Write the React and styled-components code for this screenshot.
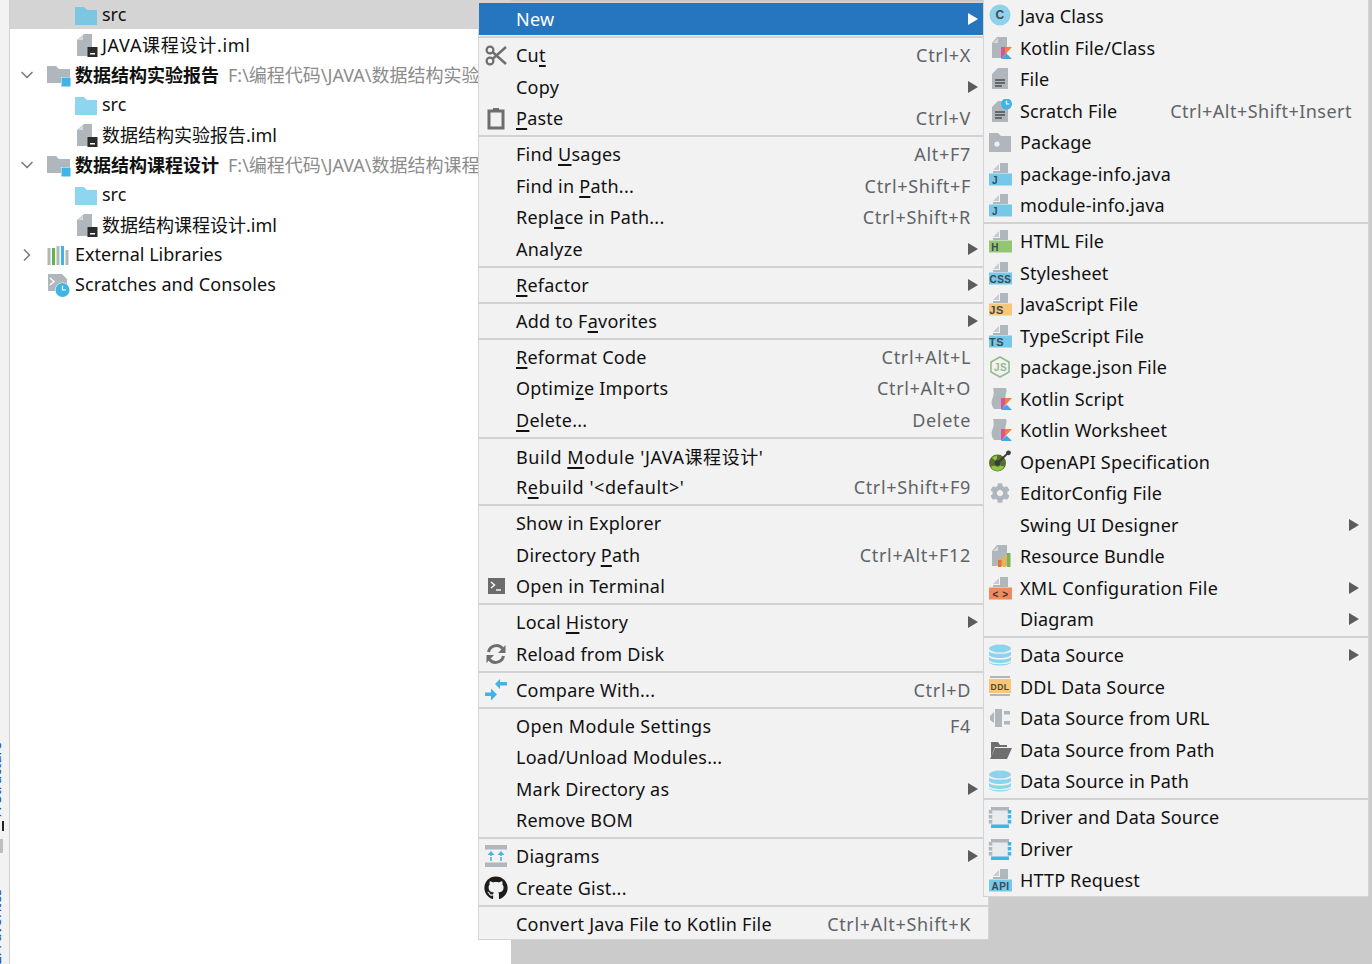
import React from 'react';
import styled, { createGlobalStyle } from 'styled-components';
import { ChevronDown, ChevronRight } from 'lucide-react';
import { FaGithub, FaCog } from 'react-icons/fa';

const GlobalStyle = createGlobalStyle`
  html, body {
    margin: 0;
    background: #cbcbcb;
    overflow: hidden;
  }
  body {
    font-family: "Noto Sans", "Noto Sans CJK SC", sans-serif;
    font-size: 18px;
    color: #111;
  }
`;

const Page = styled.div`
  position: relative;
  display: flex;
  width: 1372px;
  height: 964px;
  overflow: hidden;
`;

const Gutter = styled.div`
  width: 9px;
  flex-shrink: 0;
  box-sizing: border-box;
  padding-top: 742px;
  background: #f2f2f2;
  overflow: hidden;
  display: flex;
  flex-direction: column;
`;

const GutterLabel = styled.div`
  flex-shrink: 0;
  writing-mode: vertical-rl;
  transform: rotate(180deg);
  margin-left: -13px;
  font-size: 14px;
  line-height: 18px;
  color: #0f4fb8;
  white-space: nowrap;
`;

const GutterBar = styled.div`
  flex-shrink: 0;
  width: 1.5px;
  height: 10px;
  margin: 3px 0 8px 2px;
  background: #222;
`;

const GutterBlock = styled.div`
  flex-shrink: 0;
  width: 3px;
  height: 14px;
  margin-bottom: 36px;
  background: #bdbdbd;
`;

const Tree = styled.div`
  width: 501px;
  flex-shrink: 0;
  border-left: 1px solid #d0d0d0;
  background: #fff;
  overflow: hidden;
`;

const TreeRow = styled.div`
  display: flex;
  align-items: center;
  height: ${p => (p.$selected ? 29 : 30)}px;
  margin-bottom: ${p => (p.$selected ? 1 : 0)}px;
  padding-left: ${p => p.$indent}px;
  background: ${p => (p.$selected ? '#d4d4d4' : 'transparent')};
  white-space: nowrap;
`;

const Toggle = styled.span`
  display: flex;
  justify-content: center;
  width: 20px;
  margin-right: 10px;
  color: #7d7d7d;
`;

const TreeIcon = styled.span`
  display: flex;
  width: 24px;
  margin-right: 4px;
  flex-shrink: 0;
`;

const TreeName = styled.span`
  margin-top: -2px;
  font-weight: ${p => (p.$bold ? 700 : 400)};
  letter-spacing: ${p => p.$spacing || 0}px;
`;

const TreePath = styled.span`
  margin: -2px 0 0 9px;
  color: #8c8c8c;
`;

const Menu = styled.div`
  position: absolute;
  box-sizing: border-box;
  left: ${p => p.$left}px;
  top: ${p => p.$top}px;
  width: ${p => p.$width}px;
  padding-top: 0.25px;
  background: #f2f2f2;
  border: 1px solid #d4d4d4;
`;

const Row = styled.div`
  display: flex;
  align-items: center;
  height: 31.5px;
  padding-right: ${p => p.$right}px;
  background: ${p => (p.$active ? '#2675bf' : 'transparent')};
  color: ${p => (p.$active ? '#fff' : '#111')};
  white-space: nowrap;
`;

const Slot = styled.span`
  display: flex;
  justify-content: center;
  flex-shrink: 0;
  width: ${p => p.$size}px;
  margin-right: ${p => p.$gap}px;
`;

const Label = styled.span`
  flex: 1;
  letter-spacing: ${p => p.$spacing}px;
`;

const Mnemonic = styled.span`
  text-decoration: underline;
  text-underline-offset: 3px;
  text-decoration-thickness: 1.5px;
`;

const Shortcut = styled.span`
  color: #5f6468;
  letter-spacing: ${p => p.$spacing}px;
`;

const Arrow = styled.span`
  width: 0;
  height: 0;
  margin-right: -6.5px;
  border-left: 10px solid ${p => (p.$active ? '#fff' : '#5c5c5c')};
  border-top: 6px solid transparent;
  border-bottom: 6px solid transparent;
`;

const Divider = styled.div`
  display: flex;
  align-items: center;
  height: 4.5px;
  &::before {
    content: '';
    flex: 1;
    height: 2px;
    background: #d2d2d2;
  }
`;

const Svg = ({ children }) => (
  <svg width="24" height="24" viewBox="0 0 24 24" style={{ display: 'block' }}>
    {children}
  </svg>
);

const GRAY = '#afb7bd';
const BLUE = '#40b4e5';
const DARK = '#6e6e6e';

const Tag = ({ x = 12.5, size = 10, fill = '#3c4a52', children, y = 22 }) => (
  <text
    x={x}
    y={y}
    textAnchor="middle"
    fontSize={size}
    fontWeight="700"
    letterSpacing="0.5"
    fontFamily="'Liberation Sans', sans-serif"
    fill={fill}
  >
    {children}
  </text>
);

const Kotlin = () => (
  <g>
    <polygon points="13,11 17,11 17,18 13,23" fill="#d1569b" />
    <polygon points="17,11 24,11 17,18.500" fill="#f4803a" />
    <polygon points="13,23 18.500,17.500 24,23" fill="#3fa9e8" />
  </g>
);

const BandFile = ({ band, children }) => (
  <Svg>
    <polygon points="12,1 20,1 20,11 5,11 5,9 12,9" fill={GRAY} />
    <polygon points="5,8 11,2 11,8" fill="#c7ccd1" />
    <rect x="1" y="11.500" width="23" height="12" fill={band} />
    {children}
  </Svg>
);

const Clock = ({ cx, cy, r }) => (
  <g>
    <circle cx={cx} cy={cy} r={r} fill={BLUE} />
    <path d={`M${cx} ${cy - r * 0.6}V${cy}H${cx + r * 0.5}`} stroke="#fff" strokeWidth="1.2" fill="none" />
  </g>
);

const Lines = () => (
  <path d="M7 13h10M7 16h10M7 19h7" stroke="#4d4d4d" strokeWidth="1.4" />
);

const Database = ({ color = '#8ed3ee' }) => (
  <Svg>
    <ellipse cx="12" cy="5.500" rx="11" ry="4" fill={color} />
    <path d="M1 8.500c2 3 20 3 22 0v3.500c-2 4-20 4-22 0z" fill={color} />
    <path d="M1 14c2 3.500 20 3.500 22 0v3c-2 4-20 4-22 0z" fill={color} />
    <path d="M1 19c2 3 20 3 22 0v.5c-2 4-20 4-22 0z" fill={color} />
  </Svg>
);

const Driver = () => (
  <Svg>
    <rect x="3" y="4" width="18" height="17" fill="#e9ebec" />
    <rect x="3" y="2" width="18" height="3.500" fill={GRAY} />
    <path d="M2.500 5v15" stroke={GRAY} strokeWidth="3.500" strokeDasharray="3.500 1.500" />
    <path d="M21.500 5v15" stroke={BLUE} strokeWidth="3.500" strokeDasharray="3.500 1.500" />
    <rect x="3" y="19.500" width="18" height="3.500" fill={BLUE} />
  </Svg>
);

const icons = {
  cut: (
    <Svg>
      <circle cx="6" cy="7" r="3.400" fill="none" stroke={DARK} strokeWidth="2.200" />
      <circle cx="6" cy="18" r="3.400" fill="none" stroke={DARK} strokeWidth="2.200" />
      <path d="M8.500 9L22 21M8.500 16L22 4" stroke={DARK} strokeWidth="2.400" />
    </Svg>
  ),
  paste: (
    <Svg>
      <rect x="5" y="5" width="14" height="17" fill="none" stroke={DARK} strokeWidth="3" />
      <rect x="9" y="2" width="6" height="4" fill={DARK} />
    </Svg>
  ),
  terminal: (
    <Svg>
      <rect x="4" y="4" width="17" height="16" fill="#6b6b6b" />
      <path d="M7 8l3.500 3L7 14" stroke="#fff" strokeWidth="1.400" fill="none" />
      <path d="M12 16h5" stroke="#fff" strokeWidth="1.400" />
    </Svg>
  ),
  reload: (
    <Svg>
      <path d="M4.500 10a8 8 0 0 1 14-3.500" stroke={DARK} strokeWidth="3" fill="none" />
      <polygon points="21.500,3 21.500,11 14,11" fill={DARK} />
      <path d="M19.500 14a8 8 0 0 1-14 3.500" stroke={DARK} strokeWidth="3" fill="none" />
      <polygon points="2.500,21 2.500,13 10,13" fill={DARK} />
    </Svg>
  ),
  compare: (
    <Svg>
      <polygon points="11,6 16,1 16,4 23,4 23,7.500 16,7.500 16,11" fill={BLUE} />
      <polygon points="13,16.500 7,10.500 7,14.500 1,14.500 1,18 7,18 7,22.500" fill={BLUE} />
    </Svg>
  ),
  diagrams: (
    <Svg>
      <rect x="1" y="1" width="22" height="4.500" fill={GRAY} />
      <rect x="1" y="18.500" width="22" height="4.500" fill={GRAY} />
      <path d="M7 17V10M17 17V10" stroke={BLUE} strokeWidth="1.600" strokeDasharray="4 1" />
      <path d="M3.500 11L7 7l3.500 4M13.500 11L17 7l3.500 4" fill={BLUE} />
    </Svg>
  ),
  github: <FaGithub size={24} color="#1c1c1c" />,
  javaClass: (
    <Svg>
      <circle cx="12" cy="11" r="10.500" fill="#8fd2ea" />
      <Tag x={12} y={15} size={12} fill="#3f4c54">C</Tag>
    </Svg>
  ),
  kotlinFile: (
    <Svg>
      <polygon points="9,1 19,1 19,22 4,22 4,7" fill={GRAY} />
      <polygon points="5,7 10,2 10,7" fill="#d5d9dc" />
      <Kotlin />
    </Svg>
  ),
  file: (
    <Svg>
      <polygon points="10,1 20,1 20,22 4,22 4,7" fill={GRAY} />
      <Lines />
    </Svg>
  ),
  scratch: (
    <Svg>
      <polygon points="10,2 20,2 20,23 4,23 4,8" fill={GRAY} />
      <Lines />
      <Clock cx={18.500} cy={5} r={5.500} />
    </Svg>
  ),
  pkg: (
    <Svg>
      <path d="M1 3h9l3 3h10v16H1z" fill={GRAY} />
      <circle cx="9" cy="14" r="2.600" fill="#eef0f1" />
    </Svg>
  ),
  java: <BandFile band="#76c8e8"><Tag x={7}>J</Tag></BandFile>,
  html: <BandFile band="#93c572"><Tag x={7}>H</Tag></BandFile>,
  css: <BandFile band="#76c8e8"><Tag>CSS</Tag></BandFile>,
  js: <BandFile band="#f8c676"><Tag x={8.500} size={11}>JS</Tag></BandFile>,
  ts: <BandFile band="#76c8e8"><Tag x={8.500} size={11}>TS</Tag></BandFile>,
  api: <BandFile band="#76c8e8"><Tag>API</Tag></BandFile>,
  nodeJson: (
    <Svg>
      <polygon points="12,2 21,7 21,17 12,22 3,17 3,7" fill="none" stroke="#93bb8b" strokeWidth="1.600" />
      <Tag y={16} size={10} fill="#93bb8b">JS</Tag>
    </Svg>
  ),
  kotlinScript: (
    <Svg>
      <path d="M5 1h13c2 4-2 7 0 12l-2 9H6c-3-4-3-8-1-12 1-3 1-6 0-9z" fill={GRAY} />
      <Kotlin />
    </Svg>
  ),
  openApi: (
    <Svg>
      <circle cx="9.500" cy="13" r="8.500" fill="#566f2e" />
      <path d="M3 16.500a7 7 0 0 0 13 0l-4-1a3 3 0 0 1-5 0z" fill="#8ec63f" />
      <path d="M4 8a7 7 0 0 1 5-2.500v3.500a4 4 0 0 0-2 1.500z" fill="#8ec63f" />
      <circle cx="9.500" cy="13" r="2.800" fill="#3a3a3a" />
      <path d="M9.500 13L20 3" stroke="#3a3a3a" strokeWidth="1.800" />
      <circle cx="20.500" cy="2.800" r="2.400" fill="#3a3a3a" />
    </Svg>
  ),
  gear: <FaCog size={20} color={GRAY} />,
  bundle: (
    <Svg>
      <polygon points="9,1 19,1 19,22 4,22 4,7" fill={GRAY} />
      <polygon points="5,7 10,2 10,7" fill="#d5d9dc" />
      <rect x="10" y="16" width="3.500" height="7" fill="#e8742f" />
      <rect x="14.500" y="12" width="3.500" height="11" fill="#f0b34a" />
      <rect x="19" y="9" width="3.500" height="14" fill="#7fb44b" />
    </Svg>
  ),
  xml: <BandFile band="#ee8a5f"><Tag fill="#4a2b20">{'< >'}</Tag></BandFile>,
  ddl: (
    <Svg>
      <rect x="2" y="1" width="20" height="2" fill={GRAY} />
      <rect x="2" y="19" width="20" height="2" fill={GRAY} />
      <rect x="1" y="4" width="22" height="14" fill="#f8c676" />
      <Tag x={12} y={14.500} size={8.500} fill="#4a4a3a">DDL</Tag>
    </Svg>
  ),
  plug: (
    <Svg>
      <path d="M2 10l4-4v11l-4-3z" fill={GRAY} />
      <rect x="7" y="3" width="7" height="18" fill={GRAY} />
      <rect x="16" y="5" width="6" height="3.500" fill={GRAY} />
      <rect x="16" y="15" width="6" height="3.500" fill={GRAY} />
    </Svg>
  ),
  openFolder: (
    <Svg>
      <path d="M3 19V4h7l2 3h7v2H7z" fill={DARK} />
      <polygon points="7,10 24,10 19,21 2,21" fill={DARK} />
    </Svg>
  ),
  database: <Database />,
  driver: <Driver />,
};

const treeIcons = {
  src: dark => (
    <Svg>
      <path d="M1 4h9l3 3h10v15H1z" fill={dark ? '#7cc6e2' : '#8ed5f0'} />
    </Svg>
  ),
  iml: () => (
    <Svg>
      <polygon points="10,1 18,1 18,23 3,23 3,7" fill={GRAY} />
      <polygon points="4,7 9,2 9,7" fill="#d5d9dc" />
      <rect x="13.500" y="14" width="10" height="10" fill="#2b2b2b" />
      <rect x="16" y="20" width="5" height="1.500" fill="#fff" />
    </Svg>
  ),
  module: () => (
    <Svg>
      <path d="M0 3h9l3 3h11v14H0z" fill={GRAY} />
      <rect x="14" y="14" width="10" height="9" fill="#fff" />
      <rect x="14.500" y="14.500" width="9" height="9" fill={BLUE} />
    </Svg>
  ),
  libs: () => (
    <Svg>
      <rect x="0.500" y="5" width="3" height="17" fill={GRAY} />
      <rect x="5" y="5" width="3" height="17" fill="#62b543" />
      <rect x="9.500" y="3" width="3" height="19" fill={GRAY} />
      <rect x="14" y="3" width="3" height="19" fill={BLUE} />
      <rect x="18.500" y="7" width="3" height="15" fill={GRAY} />
    </Svg>
  ),
  scratches: () => (
    <Svg>
      <path d="M1 1h14l5 5v12H1z" fill={GRAY} />
      <path d="M3 5l4 3.500-4 3.500" stroke="#fff" strokeWidth="1.400" fill="none" />
      <circle cx="15.500" cy="17" r="7.500" fill="#fff" />
      <Clock cx={15.500} cy={17} r={7} />
    </Svg>
  ),
};

const treeRows = [
  { indent: 64, icon: treeIcons.src(true), name: 'src', selected: true },
  { indent: 64, icon: treeIcons.iml(), name: 'JAVA课程设计.iml', spacing: 0.7 },
  { indent: 7, toggle: 'open', icon: treeIcons.module(), name: '数据结构实验报告', bold: true, path: 'F:\\编程代码\\JAVA\\数据结构实验报告' },
  { indent: 64, icon: treeIcons.src(), name: 'src' },
  { indent: 64, icon: treeIcons.iml(), name: '数据结构实验报告.iml' },
  { indent: 7, toggle: 'open', icon: treeIcons.module(), name: '数据结构课程设计', bold: true, path: 'F:\\编程代码\\JAVA\\数据结构课程设计' },
  { indent: 64, icon: treeIcons.src(), name: 'src' },
  { indent: 64, icon: treeIcons.iml(), name: '数据结构课程设计.iml' },
  { indent: 7, toggle: 'closed', icon: treeIcons.libs(), name: 'External Libraries' },
  { indent: 37, icon: treeIcons.scratches(), name: 'Scratches and Consoles', spacing: 0.1 },
];

// "_" marks the mnemonic letter, "-" alone is a divider
const mainMenu = [
  { label: 'New', arrow: true, active: true },
  '-',
  { label: 'Cu_t', key: 'Ctrl+X', icon: 'cut' },
  { label: 'Copy', arrow: true },
  { label: '_Paste', key: 'Ctrl+V', icon: 'paste' },
  '-',
  { label: 'Find _Usages', key: 'Alt+F7' },
  { label: 'Find in _Path...', key: 'Ctrl+Shift+F' },
  { label: 'Repl_ace in Path...', key: 'Ctrl+Shift+R' },
  { label: 'Analyze', arrow: true },
  '-',
  { label: '_Refactor', arrow: true },
  '-',
  { label: 'Add to F_avorites', arrow: true },
  '-',
  { label: '_Reformat Code', key: 'Ctrl+Alt+L' },
  { label: 'Optimi_ze Imports', key: 'Ctrl+Alt+O' },
  { label: '_Delete...', key: 'Delete' },
  '-',
  { label: "Build _Module 'JAVA课程设计'", spacing: 0.58 },
  { label: "R_ebuild '<default>'", key: 'Ctrl+Shift+F9', spacing: 0.6 },
  '-',
  { label: 'Show in Explorer' },
  { label: 'Directory _Path', key: 'Ctrl+Alt+F12' },
  { label: 'Open in Terminal', icon: 'terminal' },
  '-',
  { label: 'Local _History', arrow: true },
  { label: 'Reload from Disk', icon: 'reload' },
  '-',
  { label: 'Compare With...', key: 'Ctrl+D', icon: 'compare' },
  '-',
  { label: 'Open Module Settings', key: 'F4', spacing: 0.35 },
  { label: 'Load/Unload Modules...' },
  { label: 'Mark Directory as', arrow: true },
  { label: 'Remove BOM' },
  '-',
  { label: 'Diagrams', arrow: true, icon: 'diagrams' },
  { label: 'Create Gist...', icon: 'github' },
  '-',
  { label: 'Convert Java File to Kotlin File', key: 'Ctrl+Alt+Shift+K' },
];

const newMenu = [
  { label: 'Java Class', icon: 'javaClass' },
  { label: 'Kotlin File/Class', icon: 'kotlinFile' },
  { label: 'File', icon: 'file' },
  { label: 'Scratch File', key: 'Ctrl+Alt+Shift+Insert', icon: 'scratch' },
  { label: 'Package', icon: 'pkg' },
  { label: 'package-info.java', icon: 'java' },
  { label: 'module-info.java', icon: 'java' },
  '-',
  { label: 'HTML File', icon: 'html' },
  { label: 'Stylesheet', icon: 'css' },
  { label: 'JavaScript File', icon: 'js' },
  { label: 'TypeScript File', icon: 'ts' },
  { label: 'package.json File', icon: 'nodeJson' },
  { label: 'Kotlin Script', icon: 'kotlinScript' },
  { label: 'Kotlin Worksheet', icon: 'kotlinScript' },
  { label: 'OpenAPI Specification', icon: 'openApi' },
  { label: 'EditorConfig File', icon: 'gear' },
  { label: 'Swing UI Designer', arrow: true },
  { label: 'Resource Bundle', icon: 'bundle' },
  { label: 'XML Configuration File', arrow: true, icon: 'xml', spacing: 0.32 },
  { label: 'Diagram', arrow: true },
  '-',
  { label: 'Data Source', arrow: true, icon: 'database' },
  { label: 'DDL Data Source', icon: 'ddl' },
  { label: 'Data Source from URL', icon: 'plug' },
  { label: 'Data Source from Path', icon: 'openFolder' },
  { label: 'Data Source in Path', icon: 'database' },
  '-',
  { label: 'Driver and Data Source', icon: 'driver' },
  { label: 'Driver', icon: 'driver' },
  { label: 'HTTP Request', icon: 'api' },
];

const renderLabel = text => {
  const at = text.indexOf('_');
  if (at < 0) return text;
  return (
    <>
      {text.slice(0, at)}
      <Mnemonic>{text[at + 1]}</Mnemonic>
      {text.slice(at + 2)}
    </>
  );
};

const MenuList = ({ items, left, top, width, slot, gap, right, spacing, keySpacing }) => (
  <Menu $left={left} $top={top} $width={width}>
    {items.map((item, i) =>
      item === '-' ? (
        <Divider key={i} />
      ) : (
        <Row key={item.label} $active={item.active} $right={right}>
          <Slot $size={slot} $gap={gap}>{icons[item.icon]}</Slot>
          <Label $spacing={item.spacing || spacing}>{renderLabel(item.label)}</Label>
          {item.key && <Shortcut $spacing={keySpacing}>{item.key}</Shortcut>}
          {item.arrow && <Arrow $active={item.active} />}
        </Row>
      ),
    )}
  </Menu>
);

export default function App() {
  return (
    <Page>
      <GlobalStyle />
      <Gutter>
        <GutterLabel>7: Structure</GutterLabel>
        <GutterBar />
        <GutterBlock />
        <GutterLabel>2: Favorites</GutterLabel>
      </Gutter>
      <Tree>
        {treeRows.map((row, i) => (
          <TreeRow key={i} $indent={row.indent} $selected={row.selected}>
            {row.toggle && (
              <Toggle>
                {row.toggle === 'open' ? <ChevronDown size={20} /> : <ChevronRight size={20} />}
              </Toggle>
            )}
            <TreeIcon>{row.icon}</TreeIcon>
            <TreeName $bold={row.bold} $spacing={row.spacing}>{row.name}</TreeName>
            {row.path && <TreePath>{row.path}</TreePath>}
          </TreeRow>
        ))}
      </Tree>
      <MenuList items={mainMenu} left={478} top={2} width={511} slot={34} gap={3} right={17} spacing={0.24} keySpacing={0.68} />
      <MenuList items={newMenu} left={983} top={-1} width={386} slot={32} gap={4} right={16} spacing={0.16} keySpacing={0.48} />
    </Page>
  );
}
